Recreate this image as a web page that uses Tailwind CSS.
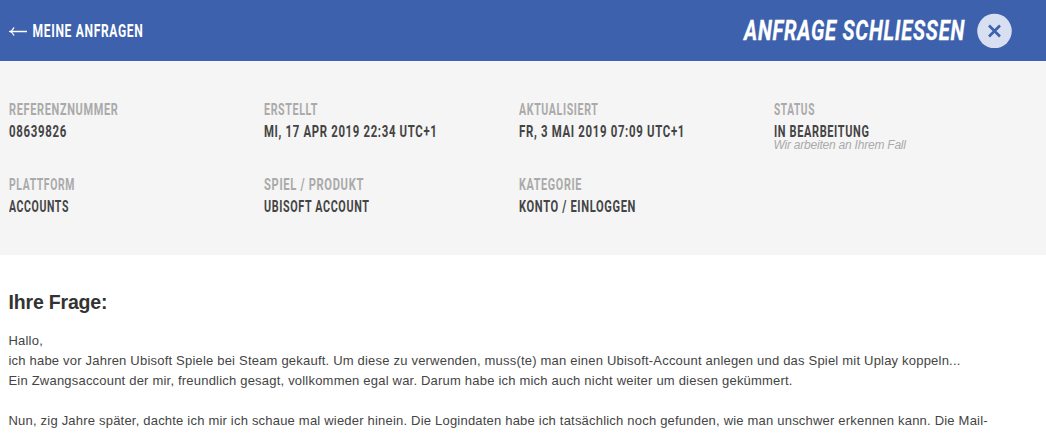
<!DOCTYPE html>
<html lang="de">
<head>
  <meta charset="UTF-8" />
  <meta name="viewport" content="width=device-width, initial-scale=1.0" />
  <title>Meine Anfragen</title>
  <script src="https://cdn.jsdelivr.net/npm/@tailwindcss/browser@4"></script>
</head>
<body class="h-[434px] overflow-hidden bg-white font-['Liberation_Sans',Arial,sans-serif] text-[#444]">
<!-- headlines are svg text so textLength can condense the face -->
<header class="flex h-[61px] items-center justify-between bg-[#3d61ad] pl-[9px] pr-[34px] font-['Roboto',sans-serif] font-bold text-white">
  <a class="flex items-center gap-[6px]">
    <svg class="h-[10px] w-[18px] shrink-0" viewBox="0 0 18 10" fill="none" stroke="#fff" stroke-width="1.3"><path d="M18 5.5H1.5M5 1.5Q3.8 4.5 .8 5.5Q3.8 6.5 5 9.5" /></svg>
    <svg class="h-[22px] w-[112px] overflow-visible text-[18px] tracking-[1px]" fill="currentColor"><text x="-0.500" y="16.500" textLength="111" lengthAdjust="spacingAndGlyphs">MEINE ANFRAGEN</text></svg>
  </a>
  <div class="flex items-center gap-[11px]">
    <svg class="h-[34px] w-[222px] overflow-visible text-[28px] italic tracking-[1px]" fill="currentColor" stroke="currentColor" stroke-width="0.3"><text x="0" y="26" textLength="221" lengthAdjust="spacingAndGlyphs">ANFRAGE SCHLIESSEN</text></svg>
    <svg class="size-[35px] shrink-0" viewBox="0 0 35 35"><circle cx="17.5" cy="18" r="17.3" fill="#d8dff0" /><path d="M12 12.5l11 11M23 12.5l-11 11" stroke="#3d61ad" stroke-width="2.6" /></svg>
  </div>
</header>

<section class="grid h-[194px] grid-cols-[255px_255px_255px_255px] content-start gap-y-[31px] bg-[#f5f5f5] pl-[8.5px] pt-[37px] font-['Roboto',sans-serif] text-[17px] font-bold leading-[22px] tracking-[1px]">
  <div class="h-11">
    <svg class="h-[22px] w-full text-[#aaa]" fill="currentColor"><text x="0" y="17" textLength="109.5" lengthAdjust="spacingAndGlyphs">REFERENZNUMMER</text></svg>
    <svg class="h-[22px] w-full" fill="currentColor"><text x="0" y="17" textLength="58" lengthAdjust="spacingAndGlyphs">08639826</text></svg>
  </div>
  <div class="h-11">
    <svg class="h-[22px] w-full text-[#aaa]" fill="currentColor"><text x="0" y="17" textLength="54" lengthAdjust="spacingAndGlyphs">ERSTELLT</text></svg>
    <svg class="h-[22px] w-full" fill="currentColor"><text x="0" y="17" textLength="173.5" lengthAdjust="spacingAndGlyphs">MI, 17 APR 2019 22:34 UTC+1</text></svg>
  </div>
  <div class="h-11">
    <svg class="h-[22px] w-full text-[#aaa]" fill="currentColor"><text x="0" y="17" textLength="79.5" lengthAdjust="spacingAndGlyphs">AKTUALISIERT</text></svg>
    <svg class="h-[22px] w-full" fill="currentColor"><text x="0" y="17" textLength="166" lengthAdjust="spacingAndGlyphs">FR, 3 MAI 2019 07:09 UTC+1</text></svg>
  </div>
  <div class="h-11">
    <svg class="h-[22px] w-full text-[#aaa]" fill="currentColor"><text x="0" y="17" textLength="41" lengthAdjust="spacingAndGlyphs">STATUS</text></svg>
    <svg class="h-[22px] w-full" fill="currentColor"><text x="0" y="17" textLength="95.5" lengthAdjust="spacingAndGlyphs">IN BEARBEITUNG</text></svg>
    <p class="-mt-1 font-['Liberation_Sans',Arial,sans-serif] text-[12px] font-normal italic leading-[14px] tracking-[-0.22px] text-[#aaa]">Wir arbeiten an Ihrem Fall</p>
  </div>
  <div class="h-11">
    <svg class="h-[22px] w-full text-[#aaa]" fill="currentColor"><text x="0" y="17" textLength="66" lengthAdjust="spacingAndGlyphs">PLATTFORM</text></svg>
    <svg class="h-[22px] w-full" fill="currentColor"><text x="0" y="17" textLength="60" lengthAdjust="spacingAndGlyphs">ACCOUNTS</text></svg>
  </div>
  <div class="h-11">
    <svg class="h-[22px] w-full text-[#aaa]" fill="currentColor"><text x="0" y="17" textLength="100" lengthAdjust="spacingAndGlyphs">SPIEL / PRODUKT</text></svg>
    <svg class="h-[22px] w-full" fill="currentColor"><text x="0" y="17" textLength="105.5" lengthAdjust="spacingAndGlyphs">UBISOFT ACCOUNT</text></svg>
  </div>
  <div class="h-11">
    <svg class="h-[22px] w-full text-[#aaa]" fill="currentColor"><text x="0" y="17" textLength="63" lengthAdjust="spacingAndGlyphs">KATEGORIE</text></svg>
    <svg class="h-[22px] w-full" fill="currentColor"><text x="0" y="17" textLength="117" lengthAdjust="spacingAndGlyphs">KONTO / EINLOGGEN</text></svg>
  </div>
</section>

<main class="pl-[8.5px] pt-[35px]">
  <h1 class="text-[19.5px] font-bold leading-6 tracking-[-0.18px] text-[#333]">Ihre Frage:</h1>
  <div class="mt-[17px] whitespace-nowrap text-[13px] leading-5 tracking-[0.204px]">
    <p>Hallo,<br />ich habe vor Jahren Ubisoft Spiele bei Steam gekauft. Um diese zu verwenden, muss(te) man einen Ubisoft-Account anlegen und das Spiel mit Uplay koppeln...<br />Ein Zwangsaccount der mir, freundlich gesagt, vollkommen egal war. Darum habe ich mich auch nicht weiter um diesen gekümmert.</p>
    <p class="mt-5">Nun, zig Jahre später, dachte ich mir ich schaue mal wieder hinein. Die Logindaten habe ich tatsächlich noch gefunden, wie man unschwer erkennen kann. Die Mail-</p>
  </div>
</main>
</body>
</html>
